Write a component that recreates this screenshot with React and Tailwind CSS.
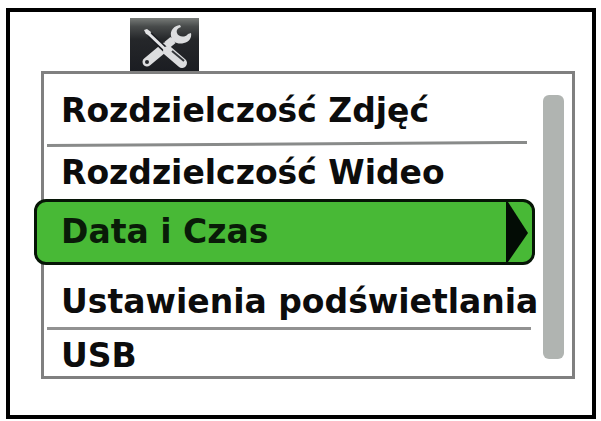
function ToolsIcon() {
  return (
    <svg viewBox="0 0 69 53" className="block h-full w-full" aria-hidden="true">
      <defs>
        <linearGradient id="tile" x1="0" y1="0" x2="0" y2="1">
          <stop offset="0" stopColor="#777b78" />
          <stop offset="0.16" stopColor="#484b4b" />
          <stop offset="0.4" stopColor="#25272a" />
          <stop offset="1" stopColor="#1b1d22" />
        </linearGradient>
      </defs>
      <rect width="69" height="53" fill="url(#tile)" />
      <path d="M17 44L35 29" stroke="#dcdddf" strokeWidth="9" strokeLinecap="round" />
      <path d="M37 27L46 19" stroke="#dcdddf" strokeWidth="5" />
      <path d="M37 27L43 22" stroke="#dcdddf" strokeWidth="8" />
      <path
        d="M50 7C44 8 40 12 41 18C42 24 48 27 54 25C59 24 62 20 61 15L58 16C55 20 48 19 47 15C46 12 48 10 51 9Z"
        fill="#dcdddf"
      />
      <circle cx="17" cy="44" r="2" fill="#25272c" />
      <path d="M20 17L39 35" stroke="#1b1d22" strokeWidth="6" />
      <path d="M14 12L17 11L21 14L20 17L16 16Z" fill="#e3e4e6" />
      <path d="M18 15L38 34" stroke="#e3e4e6" strokeWidth="3" />
      <path d="M38 33L52 45" stroke="#dcdddf" strokeWidth="10" strokeLinecap="round" />
      <path d="M42 33L54 43" stroke="#34373b" strokeWidth="2" />
    </svg>
  );
}

function MenuButton({ children, className }) {
  return (
    <button type="button" className={`block w-full whitespace-nowrap pl-[17px] text-left leading-10 ${className}`}>
      {children}
    </button>
  );
}

export default function App() {
  return (
    <div className="bg-white p-1 font-['DejaVu_Sans',Verdana,sans-serif] text-[33px] font-bold text-[#0c0c0c]">
      <main className="mt-1 mr-px ml-0.5 border-4 border-black pt-1.5 pr-[17px] pb-9 pl-[31px]">
        <button type="button" aria-label="Ustawienia" className="ml-[89px] block h-[53px] w-[69px]">
          <ToolsIcon />
        </button>
        <nav aria-label="Menu ustawień" className="flex border-3 border-[#808080]">
          <ul className="min-w-0 flex-1">
            <li>
              <MenuButton className="pt-[17px] pb-2.5">Rozdzielczość Zdjęć</MenuButton>
              <svg viewBox="0 0 480 6" preserveAspectRatio="none" className="ml-[3px] block h-1.5 w-[calc(100%-19px)]" aria-hidden="true">
                <path d="M0 4.5L480 1.5" stroke="#898b8a" strokeWidth="3" />
              </svg>
            </li>
            <li>
              <MenuButton className="pt-1.5 pb-1.5">Rozdzielczość Wideo</MenuButton>
            </li>
            <li className="relative -ml-2.5 mr-2">
              <button
                type="button"
                aria-current="true"
                className="flex h-[66px] w-full items-stretch rounded-xl border-3 border-[#061506] bg-[#48b936] pr-1 pl-6 text-left leading-10 text-[#091b08]"
              >
                <span className="flex-1 pt-2.5">Data i Czas</span>
                <svg viewBox="0 0 22 60" className="h-[60px] w-[22px]" aria-hidden="true">
                  <path d="M0 0H2L22 31L2 60H0Z" fill="#030c05" />
                </svg>
              </button>
            </li>
            <li>
              <MenuButton className="pt-[17px] pb-[5px]">Ustawienia podświetlania</MenuButton>
              <div className="mr-3 ml-[3px] h-[3px] bg-[#929292]" />
            </li>
            <li>
              <MenuButton className="pt-1.5">USB</MenuButton>
            </li>
          </ul>
          <div className="mt-[21px] mr-2 mb-[17px] w-[21px] shrink-0 rounded-md bg-[#b0b4b1]" />
        </nav>
      </main>
    </div>
  );
}
